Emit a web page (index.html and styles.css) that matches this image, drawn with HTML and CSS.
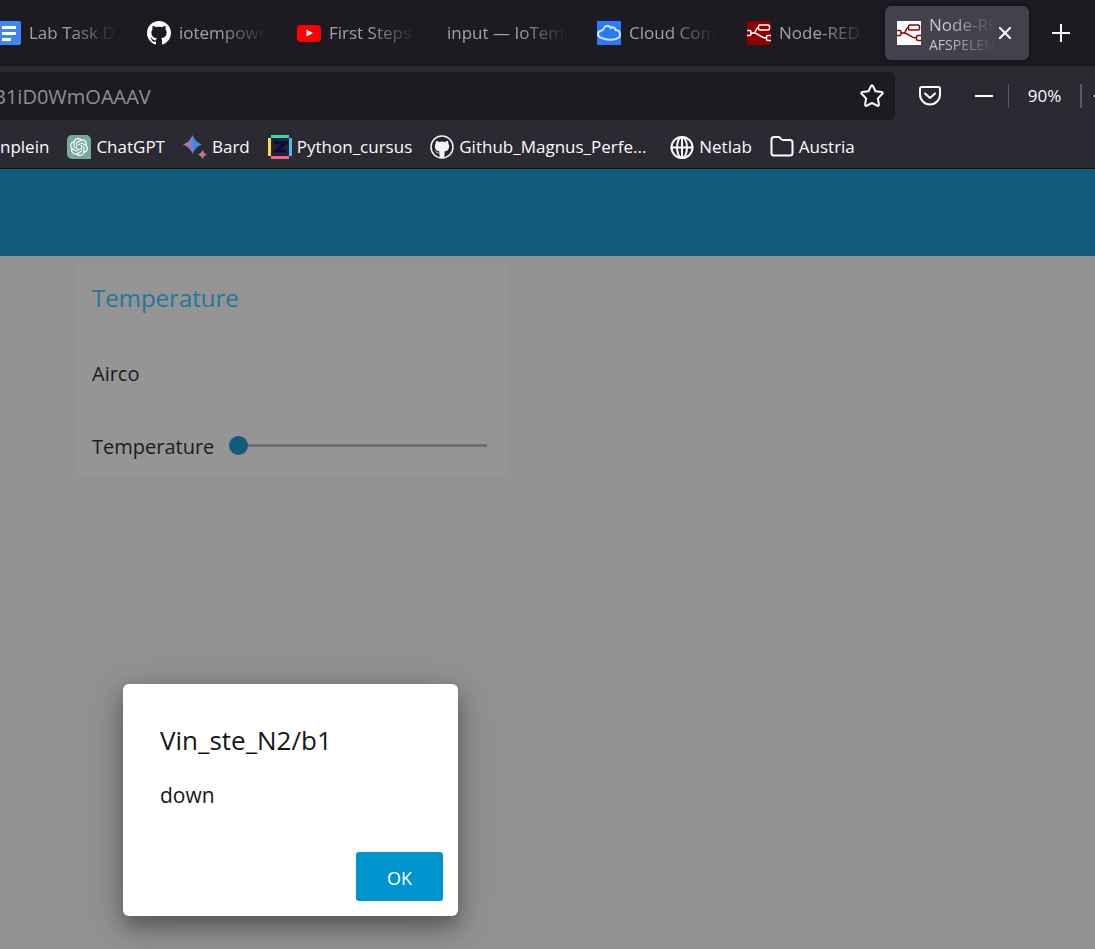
FILE: index.html
```html
<!DOCTYPE html>
<html lang="en">
<head>
<meta charset="utf-8">
<title>Node-RED Dashboard</title>
<link rel="stylesheet" href="styles.css">
</head>
<body>
<svg class="defs" aria-hidden="true">
  <symbol id="octocat" viewBox="0 0 16 16"><path d="M8 0C3.58 0 0 3.58 0 8c0 3.54 2.29 6.53 5.47 7.59.4.07.55-.17.55-.38 0-.19-.01-.82-.01-1.49-2.01.37-2.53-.49-2.69-.94-.09-.23-.48-.94-.82-1.13-.28-.15-.68-.52-.01-.53.63-.01 1.08.58 1.23.82.72 1.21 1.87.87 2.33.66.07-.52.28-.87.51-1.07-1.78-.2-3.64-.89-3.64-3.95 0-.87.31-1.59.82-2.15-.08-.2-.36-1.02.08-2.12 0 0 .67-.21 2.2.82.64-.18 1.32-.27 2-.27s1.36.09 2 .27c1.53-1.04 2.2-.82 2.2-.82.44 1.1.16 1.92.08 2.12.51.56.82 1.27.82 2.15 0 3.07-1.87 3.75-3.65 3.95.29.25.54.73.54 1.48 0 1.07-.01 1.93-.01 2.2 0 .21.15.46.55.38A8.01 8.01 0 0 0 16 8c0-4.42-3.58-8-8-8z"/></symbol>
  <symbol id="flow" viewBox="0 0 24 24"><g fill="none" stroke="currentColor" stroke-width="1.5"><rect x="11.5" y="4" width="11" height="5" rx="1.5"/><path d="M0 9.500h2.500q1.500 0 1.500 1.500v2q0 1.500-1.500 1.500H0M24 14.500h-3q-1.500 0-1.500 1.500v2q0 1.500 1.500 1.500h3M4 12h2.500c3 0 2-5.500 5-5.500M6.500 12c5 0 7 5 13 5"/></g></symbol>
</svg>

<header class="browser">
  <nav class="tabs" aria-label="Tabs">
    <button class="tab" type="button">
      <svg class="icon" viewBox="0 0 24 24"><rect width="24" height="24" rx="2" fill="#4285f4"/><path fill="#fff" d="M5 5h14v3H5zM5 11h14v3H5zM5 17h9v3H5z"/></svg>
      <span class="tab-text">Lab Task De</span>
    </button>
    <button class="tab" type="button">
      <svg class="icon" fill="#fff"><use href="#octocat"/></svg>
      <span class="tab-text">iotempowe</span>
    </button>
    <button class="tab" type="button">
      <svg class="icon" viewBox="0 0 24 24"><rect y="4" width="24" height="17" rx="4" fill="#f00"/><path fill="#fff" d="M9.500 8.500v7l6.500-3.500z"/></svg>
      <span class="tab-text">First Steps</span>
    </button>
    <button class="tab" type="button">
      <span class="tab-text">input — IoTemp</span>
    </button>
    <button class="tab" type="button">
      <svg class="icon" viewBox="0 0 24 24"><path fill="#2979ff" d="M0 0h24v24H0z"/><path fill="none" stroke="#d5e6ff" stroke-width="2" d="M4.500 17C0 15.500 0 11 3.500 10Q5.500 9.500 6.500 8C8 4 12 4 14 7c2-1.500 4.500 0 4.500 2 3 0 4.500 2 4.500 5 0 5-12 6-18.500 3z"/></svg>
      <span class="tab-text">Cloud Com</span>
    </button>
    <button class="tab" type="button">
      <svg class="icon red"><use href="#flow"/></svg>
      <span class="tab-text">Node-RED</span>
    </button>
    <div class="tab active">
      <svg class="icon white"><use href="#flow"/></svg>
      <span class="tab-text">Node-RE<small>AFSPELEN</small></span>
      <button class="close" type="button" aria-label="Close tab"><svg viewBox="0 0 12 12"><path d="M0 0l12 12M12 0L0 12"/></svg></button>
    </div>
    <button class="new-tab" type="button" aria-label="New tab"><svg viewBox="0 0 18 18"><path d="M9 0v18M0 9h18"/></svg></button>
  </nav>

  <div class="toolbar">
    <div class="address">
      <input type="text" aria-label="Address" value="B1iD0WmOAAAV">
      <button type="button" aria-label="Bookmark this page"><svg class="line" viewBox="0 0 24 24"><path d="M10.900 2.200q1.100-2 2.200 0l2.400 5 6 .9q2 .4.700 1.900l-4.300 4.400 1 6q.1 2-1.700 1.300L12 19l-5.200 2.700q-1.800.7-1.700-1.300l1-6L1.800 10Q.5 8.500 2.500 8.100l6-.9z"/></svg></button>
    </div>
    <button class="pocket" type="button" aria-label="Save to Pocket"><svg class="line" viewBox="0 0 24 24"><path d="M4 3h16q2 0 2 2v5.500a10 10 0 0 1-20 0V5q0-2 2-2zM7 9.500l5 4.500 5-4.500"/></svg></button>
    <div class="zoom">
      <button type="button" aria-label="Zoom out"><svg class="minus" viewBox="0 0 18 2"><path fill="#fbfbfe" d="M0 0h18v2H0z"/></svg></button>
      <button class="level" type="button">90%</button>
      <button type="button" aria-label="Zoom in"><svg class="plus" viewBox="0 0 18 18"><path d="M9 0v18M0 9h18"/></svg></button>
    </div>
  </div>

  <nav class="bookmarks" aria-label="Bookmarks">
    <a href="#">nplein</a>
    <a href="#"><svg class="icon" viewBox="0 0 24 24"><path fill="#75a99c" d="M5 0h14a5 5 0 0 1 5 5v19H5a5 5 0 0 1-5-5V5a5 5 0 0 1 5-5z"/><path fill="#fff" transform="translate(3 3) scale(.75)" d="M22.282 9.821a5.985 5.985 0 0 0-.516-4.911 6.046 6.046 0 0 0-6.510-2.900A6.065 6.065 0 0 0 4.981 4.182a5.985 5.985 0 0 0-3.998 2.900 6.046 6.046 0 0 0 .743 7.097 5.980 5.980 0 0 0 .511 4.911 6.051 6.051 0 0 0 6.515 2.900A5.985 5.985 0 0 0 13.260 24a6.056 6.056 0 0 0 5.772-4.206 5.989 5.989 0 0 0 3.998-2.900 6.056 6.056 0 0 0-.748-7.073zm-9.022 12.608a4.476 4.476 0 0 1-2.876-1.041l.142-.080 4.778-2.758a.795.795 0 0 0 .393-.681v-6.737l2.020 1.169a.071.071 0 0 1 .038.052v5.583a4.504 4.504 0 0 1-4.495 4.494zm-9.661-4.125a4.471 4.471 0 0 1-.535-3.014l.142.085 4.783 2.758a.771.771 0 0 0 .781 0l5.843-3.369v2.332a.080.080 0 0 1-.033.062L9.740 19.950a4.499 4.499 0 0 1-6.141-1.646zM2.341 7.896a4.485 4.485 0 0 1 2.366-1.973V11.600a.766.766 0 0 0 .388.677l5.814 3.354-2.020 1.169a.076.076 0 0 1-.071 0l-4.830-2.787A4.504 4.504 0 0 1 2.341 7.896zm16.596 3.856L13.104 8.364 15.119 7.200a.076.076 0 0 1 .071 0l4.830 2.791a4.494 4.494 0 0 1-.677 8.104v-5.677a.790.790 0 0 0-.407-.667zm2.011-3.023l-.142-.085-4.774-2.782a.776.776 0 0 0-.785 0L9.409 9.230V6.897a.066.066 0 0 1 .028-.062l4.830-2.787a4.499 4.499 0 0 1 6.680 4.660zM8.307 12.863l-2.020-1.164a.080.080 0 0 1-.038-.057V6.074a4.499 4.499 0 0 1 7.376-3.454l-.142.081L8.704 5.459a.795.795 0 0 0-.393.681zm1.098-2.365l2.602-1.500 2.607 1.500v2.999l-2.597 1.500-2.607-1.500Z"/></svg>ChatGPT</a>
    <a href="#"><svg class="icon" viewBox="0 0 24 24"><defs><linearGradient id="spark"><stop stop-color="#f0705c"/><stop offset=".4" stop-color="#8c78d0"/><stop offset=".65" stop-color="#2f8fe8"/><stop offset="1" stop-color="#5a84e0"/></linearGradient><linearGradient id="spark2"><stop stop-color="#ef7a4d"/><stop offset="1" stop-color="#9a6fc0"/></linearGradient></defs><path fill="url(#spark)" d="M9.500 0Q12 7 19 9.500 12 12 9.500 19 7 12 0 9.500 7 7 9.500 0z"/><path fill="url(#spark2)" d="M19.500 15q1.200 3.300 4.500 4.500-3.300 1.200-4.500 4.500-1.200-3.300-4.500-4.500 3.300-1.200 4.500-4.500z"/></svg>Bard</a>
    <a href="#"><svg class="icon" viewBox="0 0 24 24"><path fill="#25232e" d="M3 3h18v18H3z"/><path fill="#2fdbb5" d="M3 0h18v3H3z"/><path fill="#ffd64f" d="M0 3h3v18H0z"/><path fill="#f76494" d="M3 21h18v3H3z"/><path fill="#4fb9f7" d="M21 3h3v18h-3z"/><path fill="none" stroke="#0c0940" stroke-width="3" d="M6 8h11l-9 8h10"/></svg>Python_cursus</a>
    <a class="wide" href="#"><svg class="icon" viewBox="0 0 24 24"><circle cx="12" cy="12" r="11" fill="#25232e" stroke="#f4f4f4" stroke-width="1.500"/><path fill="#f4f4f4" d="M6 6q2 0 3 1 3-1 6 0 1-1 3-1l.5 3q1 1 .5 4-1 3-4.500 3.500V23h-5v-4.500q-3 .5-4-2l-1.500-1q2 0 2.500 1.500 1 1 3 .5v-1Q6 16 5 13q-.5-3 .5-4z"/></svg>Github_Magnus_Perfe...</a>
    <a href="#"><svg class="icon line" viewBox="0 0 24 24"><circle cx="12" cy="12.500" r="10.500"/><ellipse cx="12" cy="12.500" rx="5" ry="10.500"/><path d="M1.500 12.500h21M12 2v21"/></svg>Netlab</a>
    <a href="#"><svg class="icon line" viewBox="0 0 24 24"><path d="M1.500 4.500q0-2.500 2.500-2.500h4q1.500 0 2.300 1l.7 1q.7 1 2 1H20q2.500 0 2.500 2.500V18q0 2.500-2.500 2.500H4Q1.500 20.500 1.500 18z"/></svg>Austria</a>
  </nav>
</header>

<main class="page">
  <div class="page-bar"></div>
  <section class="card">
    <h1>Temperature</h1>
    <p class="row">Airco</p>
    <div class="row">
      <label for="temperature">Temperature</label>
      <input id="temperature" type="range" min="0" max="100" value="0">
    </div>
  </section>

  <div class="dialog" role="dialog" aria-labelledby="dialog-title">
    <h2 id="dialog-title">Vin_ste_N2/b1</h2>
    <p>down</p>
    <div class="actions"><button type="button">OK</button></div>
  </div>
</main>
</body>
</html>
```
FILE: styles.css
```css
* { box-sizing: border-box; }
html, body { height: 100%; }
body {
  display: flex;
  flex-direction: column;
  margin: 0;
  overflow: hidden;
  background: #929292;
  font-family: "Open Sans", "Noto Sans", sans-serif;
}
button, input { margin: 0; padding: 0; border: 0; background: none; color: inherit; font: inherit; }
h1, h2, p { margin: 0; font-weight: 400; }
svg { display: block; flex: none; }
.defs { position: absolute; width: 0; height: 0; }
.icon { width: 24px; height: 24px; }
.line { fill: none; stroke: #fbfbfe; stroke-width: 2; stroke-linejoin: round; stroke-linecap: round; }
.toolbar .line { width: 24px; height: 24px; }

.browser { flex: none; background: #2b2a33; color: #fbfbfe; border-bottom: 1px solid #0c0c0d; }

/* Tab strip */
.tabs { display: flex; align-items: center; gap: 6px; height: 66px; margin-left: -15px; background: #1c1b22; }
.tab {
  display: flex;
  flex: none;
  align-items: center;
  gap: 8px;
  width: 144px;
  height: 54px;
  padding: 0 12px;
  border-radius: 6px;
  color: #a1a1a6;
  font-size: 17px;
  line-height: 24px;
  text-align: left;
}
.tab-text {
  flex: 1;
  min-width: 0;
  overflow: hidden;
  white-space: nowrap;
  -webkit-mask-image: linear-gradient(to right, #000 calc(100% - 48px), transparent);
  mask-image: linear-gradient(to right, #000 calc(100% - 48px), transparent);
}
.tab-text small { display: block; font-size: 14px; line-height: 16px; }
.red { border-radius: 2px; background: #8f0000; color: #fff; }
.white { background: #fff; color: #8f0000; }
.active { background: #42414d; box-shadow: 0 0 4px #0c0c0d; color: #c4c4ca; }
.close { margin: 0 0 0 -10px; }
.close svg { width: 12px; height: 12px; margin: 6px; }
.close svg, .new-tab svg, .plus { fill: none; stroke: #fbfbfe; stroke-width: 2; }
.new-tab { padding: 17px; }
.new-tab svg, .plus { width: 18px; height: 18px; }

/* Address bar and tools */
.toolbar { display: flex; align-items: center; height: 60px; margin-right: -17px; }
.address {
  display: flex;
  flex: 1;
  align-items: center;
  height: 48px;
  margin-left: -24px;
  padding: 0 11px 0 17px;
  border-radius: 6px;
  background: #1c1b22;
}
.address input { flex: 1; min-width: 0; color: #8f8f95; font-size: 20px; outline: 0; }
.pocket { margin: 0 24px 0 23px; }
.zoom { display: flex; align-items: center; font-size: 17px; line-height: 24px; }
.minus { width: 18px; height: 2px; margin: 0 15px 0 9px; }
.level { width: 74px; border: solid #5b5b66; border-width: 0 2px 0 1px; }
.plus { margin-left: 12px; }

/* Bookmarks */
.bookmarks { display: flex; align-items: center; gap: 18px; height: 42px; }
.bookmarks a { display: flex; flex: none; align-items: center; gap: 5px; color: inherit; font-size: 17px; line-height: 24px; text-decoration: none; }
.wide { width: 222px; }

/* Dashboard */
.page { position: relative; flex: 1; }
.page-bar { height: 87px; background: #115c7a; }
.card { width: 40%; max-width: 436px; margin: 8px 0 0 74px; padding: 0 23px 0 18px; background: #959595; color: #1c1c1c; }
.card h1 { color: #24789c; font-size: 24px; line-height: 68px; }
.row { display: flex; align-items: center; gap: 15px; height: 73px; font-size: 20px; line-height: 28px; padding-top: 10px; }
.row input { flex: 1; min-width: 0; height: 20px; margin-bottom: 3px; appearance: none; -webkit-appearance: none; }
.row input::-webkit-slider-runnable-track { height: 3px; background: #6e6e6e; }
.row input::-webkit-slider-thumb { -webkit-appearance: none; width: 19px; height: 19px; margin-top: -8px; border-radius: 50%; background: #115c7a; }
.row input::-moz-range-track { height: 3px; background: #6e6e6e; }
.row input::-moz-range-thumb { width: 19px; height: 19px; border: 0; border-radius: 50%; background: #115c7a; }

/* Notification */
.dialog {
  position: absolute;
  left: 123px;
  bottom: 33px;
  width: 335px;
  padding: 36px 15px 15px 37px;
  border-radius: 6px;
  background: #fff;
  box-shadow: 0 10px 18px rgba(0, 0, 0, .25), 0 10px 40px rgba(0, 0, 0, .25);
  color: #161616;
}
.dialog h2 { font-size: 26px; line-height: 40px; }
.dialog p { margin-top: 21px; font-size: 21px; line-height: 28px; }
.actions { display: flex; justify-content: flex-end; margin-top: 43px; }
.actions button { min-width: 87px; height: 49px; padding-top: 3px; border-radius: 3px; background: #0094ce; color: #fff; font-size: 18px; }
```
